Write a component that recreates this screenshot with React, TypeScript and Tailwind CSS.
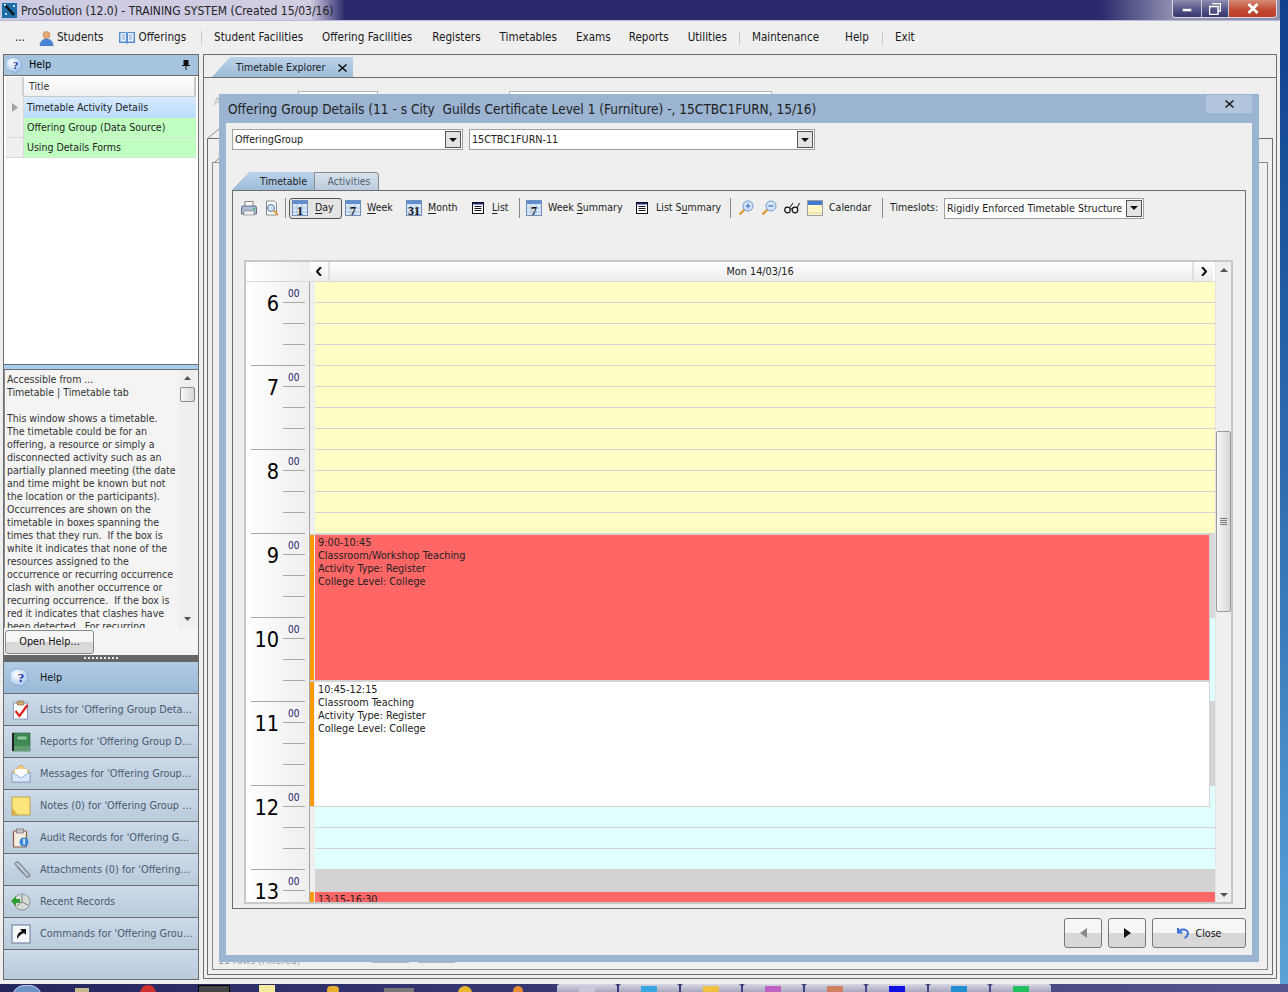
import React from "react";

const HELP_LINES = [
  "Accessible from ...",
  "Timetable | Timetable tab",
  "\u00a0",
  "This window shows a timetable.",
  "The timetable could be for an",
  "offering, a resource or simply a",
  "disconnected activity such as an",
  "partially planned meeting (the date",
  "and time might be known but not",
  "the location or the participants).",
  "Occurrences are shown on the",
  "timetable in boxes spanning the",
  "times that they run.  If the box is",
  "white it indicates that none of the",
  "resources assigned to the",
  "occurrence or recurring occurrence",
  "clash with another occurrence or",
  "recurring occurrence.  If the box is",
  "red it indicates that clashes have",
  "been detected.  For recurring",
];

function HelpIcon({ s = 18 }: { s?: number }) {
  return (
    <svg width={s} height={s} viewBox="0 0 18 18" className="shrink-0">
      <defs>
        <radialGradient id="hb" cx="40%" cy="30%" r="80%">
          <stop offset="0" stopColor="#ffffff" />
          <stop offset="1" stopColor="#8fb8ea" />
        </radialGradient>
      </defs>
      <path d="M9 1a8 7.5 0 1 0-2 14.6l2.5 2 .6-2.2A8 7.5 0 0 0 9 1z" fill="url(#hb)" stroke="#7d9cc8" strokeWidth=".6" />
      <text x="9" y="13" textAnchor="middle" fontSize="12" fontWeight="700" fontFamily="Liberation Serif" fill="#1c2f9c">?</text>
    </svg>
  );
}

function NavIcon({ k }: { k: number }) {
  const p = { width: 20, height: 20, viewBox: "0 0 20 20", className: "shrink-0" };
  if (k === 1)
    return (
      <svg {...p}>
        <rect x="2.5" y="3" width="14" height="16" fill="#fff" stroke="#8aa0c0" />
        <rect x="6" y="1" width="7" height="4" rx="1" fill="#caa672" stroke="#87603a" strokeWidth=".6" />
        <path d="M4.5 11l4 5 8-11" fill="none" stroke="#e02020" strokeWidth="2.2" />
      </svg>
    );
  if (k === 2)
    return (
      <svg {...p}>
        <rect x="2" y="1" width="17" height="18" fill="#3f8a55" stroke="#27583a" strokeWidth=".6" />
        <rect x="1" y="1" width="2" height="18" fill="#222" />
        <rect x="6" y="4" width="10" height="4" fill="#8cc79a" stroke="#2f6d44" strokeWidth=".6" />
        <rect x="3" y="14" width="16" height="5" fill="#5f9d72" />
      </svg>
    );
  if (k === 3)
    return (
      <svg {...p}>
        <path d="M10 1L1 8v10h18V8z" fill="#f6cf7d" stroke="#c89a4a" strokeWidth=".7" />
        <path d="M4 5h12v7l-6 3-6-3z" fill="#fff" />
        <path d="M1 8l9 6 9-6v10H1z" fill="#d8e6fb" stroke="#6f93cf" strokeWidth=".7" />
      </svg>
    );
  if (k === 4)
    return (
      <svg {...p}>
        <rect x="1" y="1" width="18" height="18" fill="#fbe57c" stroke="#b99a3a" strokeWidth=".8" />
        <path d="M1 12l6 7H1z" fill="#d6b13f" />
      </svg>
    );
  if (k === 5)
    return (
      <svg {...p}>
        <rect x="2.5" y="3" width="13" height="16" rx="1" fill="#f5ece0" stroke="#8b5a45" strokeWidth="1.2" />
        <rect x="5.5" y="1" width="7" height="4" fill="#c9c1c1" stroke="#666" strokeWidth=".6" />
        <circle cx="13" cy="14" r="4.5" fill="#3b87d8" />
        <rect x="12.3" y="11" width="1.5" height="5.5" fill="#fff" />
      </svg>
    );
  if (k === 6)
    return (
      <svg {...p}>
        <path d="M15 16L5 5c-2-2.400 1-4 3-2l10 11c1.500 2-1 4-3 2L6 7" fill="none" stroke="#8a8f95" strokeWidth="1.600" />
      </svg>
    );
  if (k === 7)
    return (
      <svg {...p}>
        <circle cx="11" cy="10" r="8" fill="#d8dbd8" stroke="#8d9490" />
        <path d="M11 10V3M11 10l6 3M11 10l-5 4" stroke="#737a76" strokeWidth="1" />
        <path d="M0 9l5-5v3h4v4H5v3z" fill="#2f9a2f" />
      </svg>
    );
  return (
    <svg {...p}>
      <rect x="1" y="1" width="18" height="18" fill="#f5f7fb" stroke="#6a7a9a" />
      <path d="M6 15c0-5 2-7 5-8l-2-2h6v6l-2-2c-3 1-5 3-7 6z" fill="#111" />
    </svg>
  );
}

const NAV = [
  "Lists for 'Offering Group Deta…",
  "Reports for 'Offering Group D…",
  "Messages for 'Offering Group…",
  "Notes (0) for 'Offering Group …",
  "Audit Records for 'Offering G…",
  "Attachments (0) for 'Offering…",
  "Recent Records",
  "Commands for 'Offering Grou…",
];

function LeftPanel() {
  return (
    <div className="ml-[3px] flex h-[926px] w-[196px] shrink-0 flex-col border border-[#6d6d6d] bg-white">
      <div className="flex h-[20px] shrink-0 items-center bg-[#a6c4de] pl-[3px] pr-[8px] text-[10.8px]">
        <HelpIcon s={17} />
        <span className="ml-[5px] flex-1">Help</span>
        <svg width="8" height="10" viewBox="0 0 8 10"><path d="M1.500 0h5v5H8v1H4.500v4h-1V6H0V5h1.500z" fill="#111" /></svg>
      </div>
      <div className="flex h-[290px] shrink-0 flex-col border-y border-[#6d6d6d] px-[2px] text-[10.5px]">
        <div className="flex h-[21px] shrink-0 pt-[1px]">
          <div className="w-[18px] border-r-2 border-[#cfcfcf] bg-[#efefef]" />
          <div className="flex flex-1 items-center border-r-2 border-b border-[#c8c8c8] bg-[linear-gradient(#ffffff,#f0f0f0)] pl-[5px] text-[#333]">Title</div>
        </div>
        <div className="flex h-[21px] shrink-0">
          <div className="flex w-[18px] items-center justify-center border-r border-[#d8d8d8] bg-[#efefef]">
            <svg width="6" height="9" viewBox="0 0 6 9"><path d="M0 0l6 4.500L0 9z" fill="#a0a0a0" /></svg>
          </div>
          <div className="flex flex-1 items-center bg-[linear-gradient(#d7eaff,#bcdcff)] pl-[3px] pt-[1px] text-[#222]">Timetable Activity Details</div>
        </div>
        <div className="flex h-[20px] shrink-0">
          <div className="w-[18px] border-r border-b border-[#d8d8d8] bg-[#efefef]" />
          <div className="flex flex-1 items-center border-b border-[#d8e8d8] bg-[#c1ffc1] pl-[3px] pt-[1px] text-[#222]">Offering Group (Data Source)</div>
        </div>
        <div className="flex h-[20px] shrink-0">
          <div className="w-[18px] border-r border-b border-[#d8d8d8] bg-[#efefef]" />
          <div className="flex flex-1 items-center border-b border-[#d8e8d8] bg-[#c1ffc1] pl-[3px] pt-[1px] text-[#222]">Using Details Forms</div>
        </div>
      </div>
      <div className="h-[5px] shrink-0 border-b border-[#6d6d6d] bg-[#a9cdf2]" />
      <div className="flex h-[258px] shrink-0 overflow-hidden border-l border-[#8a8a8a] bg-[#f4f4f4]">
        <div className="w-[174px] overflow-hidden pl-[2px] pt-[3px] text-[10.5px] leading-[13px] whitespace-pre text-[#333]">
          {HELP_LINES.map((l, i) => (
            <div key={i}>{l}</div>
          ))}
        </div>
        <div className="flex w-[17px] flex-col items-center bg-[#efefef] pt-[6px]">
          <svg width="7" height="4" viewBox="0 0 7 4"><path d="M3.500 0L7 4H0z" fill="#555" /></svg>
          <div className="mt-[7px] h-[15px] w-[15px] rounded-[2px] border border-[#8a8a8a] bg-[linear-gradient(90deg,#f8f8f8,#d8d8d8)]" />
          <div className="flex-1" />
          <svg className="mb-[7px]" width="7" height="4" viewBox="0 0 7 4"><path d="M0 0h7L3.500 4z" fill="#555" /></svg>
        </div>
      </div>
      <div className="flex h-[27px] shrink-0 items-center border-t border-[#f4f4f4] bg-[#f4f4f4] pl-[1px]">
        <div className="flex h-[24px] w-[89px] items-center justify-center rounded-[3px] border border-[#8a8a8a] bg-[linear-gradient(#f6f6f6_50%,#d9d9d9_50%)] pt-[1px] text-[10.8px] text-[#111]">Open Help...</div>
      </div>
      <div className="flex h-[7px] shrink-0 items-start justify-center bg-[#666]">
        <div className="mt-[2px] h-[2px] w-[35px] bg-[repeating-linear-gradient(90deg,#e8e8e8_0,#e8e8e8_2px,#666_2px,#666_4px)]" />
      </div>
      <div className="flex h-[32px] shrink-0 items-center border-b border-[#6d6d6d] bg-[linear-gradient(#b1cbe4,#9ab9d7)] pl-[7px] text-[10.8px] text-[#111]">
        <HelpIcon s={20} />
        <span className="ml-[9px] pt-[2px]">Help</span>
      </div>
      {NAV.map((t, i) => (
        <div key={t} className="flex h-[32px] shrink-0 items-center border-b border-[#6d6d6d] bg-[linear-gradient(#cddbea,#b9cadb)] pl-[7px] text-[10.8px] text-[#4a5a70]">
          <NavIcon k={i + 1} />
          <span className="ml-[9px] whitespace-nowrap pt-[2px]">{t}</span>
        </div>
      ))}
      <div className="flex-1 bg-[linear-gradient(#cddbea,#b9cadb)]" />
    </div>
  );
}

function Sep({ className }: { className: string }) {
  return <div className={`h-[14px] w-[1px] bg-[#c8c8c8] ${className}`} />;
}

function MenuBar() {
  return (
    <div className="flex h-[33px] shrink-0 items-center pl-[15px] pt-[1px] text-[11.6px] text-[#1a1a1a]">
      <span>...</span>
      <svg className="ml-[14px]" width="15" height="15" viewBox="0 0 15 15">
        <circle cx="7.500" cy="4" r="3.500" fill="#e8a878" stroke="#a86a3a" strokeWidth=".5" />
        <path d="M1 15c0-5 3-7 6.500-7S14 10 14 15z" fill="#4a86d8" stroke="#2a5aa0" strokeWidth=".5" />
      </svg>
      <span className="ml-[3px]">Students</span>
      <svg className="ml-[16px]" width="16" height="14" viewBox="0 0 16 14">
        <path d="M0 1h7.500l.5 1 .5-1H16v11H9l-1 1-1-1H0z" fill="#5c8fd0" />
        <path d="M1.500 2h5.500v8.500H1.500zM9 2h5.500v8.500H9z" fill="#e9f1fb" />
        <path d="M3 4h3M3 6h3M3 8h3M10 4h3M10 6h3M10 8h3" stroke="#7a9ccc" strokeWidth=".8" />
      </svg>
      <span className="ml-[3px]">Offerings</span>
      <Sep className="ml-[15px]" />
      <span className="ml-[12px]">Student Facilities</span>
      <span className="ml-[19px]">Offering Facilities</span>
      <span className="ml-[20px]">Registers</span>
      <span className="ml-[19px]">Timetables</span>
      <span className="ml-[19px]">Exams</span>
      <span className="ml-[18px]">Reports</span>
      <span className="ml-[19px]">Utilities</span>
      <Sep className="ml-[12px]" />
      <span className="ml-[12px]">Maintenance</span>
      <span className="ml-[26px]">Help</span>
      <Sep className="ml-[13px]" />
      <span className="ml-[12px]">Exit</span>
    </div>
  );
}

function TitleBar() {
  return (
    <div className="flex h-[21px] shrink-0 items-center border-b border-[#b9b9d6] bg-[linear-gradient(90deg,#c9cbe3_0,#d3cde3_310px,#2a2a6c_345px,#2a2a6c_1100px,#8f8fb0_1172px)] pl-[2px] text-[12px]">
      <svg className="shrink-0" width="15" height="15" viewBox="0 0 15 15">
        <rect width="15" height="15" fill="#1c6fa8" />
        <path d="M3 2l9 10" stroke="#111" strokeWidth="2.400" />
        <path d="M2 2l2 0M11 3h2M3 11h2" stroke="#fff" strokeWidth="1.500" />
      </svg>
      <span className="ml-[4px] flex-1 whitespace-nowrap pt-[1px] text-[#222]">ProSolution (12.0) - TRAINING SYSTEM (Created 15/03/16)</span>
      <div className="mr-[3px] flex h-[18px] self-start overflow-hidden rounded-b-[4px] border border-t-0 border-[#d9d9e8]">
        <div className="flex w-[29px] items-center justify-center border-r border-[#c8c8dc] bg-[linear-gradient(#8f8fb3,#5a5a8a_50%,#34346e)] pt-[3px]">
          <div className="h-[4px] w-[10px] border border-[#7878a0] bg-white" />
        </div>
        <div className="flex w-[27px] items-center justify-center border-r border-[#c8c8dc] bg-[linear-gradient(#8f8fb3,#5a5a8a_50%,#34346e)]">
          <svg width="12" height="12" viewBox="0 0 12 12"><path d="M3 .5h8.500V8H9M.5 3.500H9v8H.5z" fill="none" stroke="#fff" strokeWidth="1.500" /></svg>
        </div>
        <div className="flex w-[47px] items-center justify-center bg-[linear-gradient(#d88b7a,#c04a30_60%,#c0392b)]">
          <svg width="12" height="11" viewBox="0 0 12 11"><path d="M1.500 1l9 9M10.500 1l-9 9" stroke="#fff" strokeWidth="2.800" /></svg>
        </div>
      </div>
    </div>
  );
}

function Cal({ n }: { n: string }) {
  return (
    <svg width="16" height="16" viewBox="0 0 16 16" className="shrink-0">
      <rect x=".5" y=".5" width="15" height="15" fill="#dbe7f7" stroke="#6e8db8" />
      <rect x="1" y="1" width="14" height="3" fill="#5f8fd0" />
      <path d="M1 8h14M1 12h14M5 4v11M10 4v11" stroke="#9fb8d8" strokeWidth=".7" />
      <text x="8" y="14.500" textAnchor="middle" fontSize="12" fontWeight="700" fontFamily="Liberation Serif" fill="#111">{n}</text>
    </svg>
  );
}

function ListIco() {
  return (
    <svg width="12" height="12" viewBox="0 0 12 12" className="shrink-0">
      <rect x=".5" y=".5" width="11" height="11" fill="#fff" stroke="#111" />
      <rect x="1" y="1" width="10" height="1.500" fill="#1a2a8a" />
      <path d="M2.500 4.500h7M2.500 6.500h7M2.500 8.500h7" stroke="#111" />
    </svg>
  );
}

function Mag({ sign }: { sign: "+" | "-" }) {
  return (
    <svg width="16" height="16" viewBox="0 0 16 16" className="shrink-0">
      <path d="M6.500 9.500L1.500 14.500" stroke="#e39a3a" strokeWidth="2.400" />
      <circle cx="10" cy="6" r="5" fill="#d5e6fb" stroke="#6f97cf" />
      <path d={sign === "+" ? "M7.500 6h5M10 3.500v5" : "M7.500 6h5"} stroke="#3f6fb8" strokeWidth="1.200" />
    </svg>
  );
}

function Toolbar() {
  return (
    <div className="flex h-[22px] shrink-0 items-center text-[10.5px] text-[#222]">
      <svg className="ml-[8px] shrink-0" width="16" height="15" viewBox="0 0 16 15">
        <rect x="4" y="0.500" width="8" height="5" fill="#fff" stroke="#888" />
        <path d="M1 5h14l.5 3v5H.5V8z" fill="#a9bdd6" stroke="#60708a" />
        <rect x="3" y="10" width="10" height="4" fill="#f4f4f4" stroke="#777" strokeWidth=".6" />
        <rect x="12" y="7" width="2" height="1.500" fill="#3ac03a" />
      </svg>
      <svg className="ml-[7px] shrink-0" width="16" height="16" viewBox="0 0 16 16">
        <path d="M2.500 1h8l2 2v12h-10z" fill="#fff" stroke="#8a8a8a" />
        <circle cx="7" cy="8" r="3.500" fill="#cfe2f6" stroke="#5c7da8" />
        <path d="M9.500 10.500L14 15" stroke="#e39a3a" strokeWidth="2" />
      </svg>
      <div className="ml-[5px] h-[20px] w-[1px] bg-[#888]" />
      <div className="ml-[3px] flex h-[21px] w-[53px] items-center rounded-[3px] border border-[#555] bg-[#e4e4e4] pl-[2px]">
        <Cal n="1" />
        <span className="ml-[7px]"><u className="underline-offset-2">D</u>ay</span>
      </div>
      <div className="ml-[3px]"><Cal n="7" /></div>
      <span className="ml-[6px] w-[28px]"><u className="underline-offset-2">W</u>eek</span>
      <div className="ml-[11px]"><Cal n="31" /></div>
      <span className="ml-[6px] w-[30px]"><u className="underline-offset-2">M</u>onth</span>
      <div className="ml-[14px]"><ListIco /></div>
      <span className="ml-[8px] w-[17px]"><u className="underline-offset-2">L</u>ist</span>
      <div className="ml-[10px] h-[20px] w-[1px] bg-[#888]" />
      <div className="ml-[6px]"><Cal n="7" /></div>
      <span className="ml-[6px] w-[74px] whitespace-nowrap">Week <u className="underline-offset-2">S</u>ummary</span>
      <div className="ml-[14px]"><ListIco /></div>
      <span className="ml-[8px] w-[64px] whitespace-nowrap">List S<u className="underline-offset-2">u</u>mmary</span>
      <div className="ml-[10px] h-[20px] w-[1px] bg-[#888]" />
      <div className="ml-[7px]"><Mag sign="+" /></div>
      <div className="ml-[7px]"><Mag sign="-" /></div>
      <svg className="ml-[7px] shrink-0" width="16" height="12" viewBox="0 0 16 12">
        <circle cx="3.500" cy="8" r="2.800" fill="none" stroke="#111" strokeWidth="1.200" />
        <circle cx="11" cy="8" r="2.800" fill="none" stroke="#111" strokeWidth="1.200" />
        <path d="M6 7.500c1-1 2-1 2.500 0M5.500 6L9 1M13 6l2.500-5" fill="none" stroke="#111" />
      </svg>
      <svg className="ml-[7px] shrink-0" width="16" height="17" viewBox="0 0 16 17">
        <rect x=".5" y=".5" width="15" height="15" fill="#fff6c8" stroke="#9aa0a8" />
        <rect x="1" y="1" width="14" height="4" fill="#3f7ad0" />
        <path d="M1 13h14" stroke="#c9b878" strokeDasharray="1 1" />
      </svg>
      <span className="ml-[6px] w-[43px]">Calendar</span>
      <div className="ml-[10px] h-[20px] w-[1px] bg-[#888]" />
      <span className="ml-[7px] w-[48px]">Timeslots:</span>
      <div className="ml-[6px]">
        <Combo w="w-[200px]" text="Rigidly Enforced Timetable Structure" size="text-[10.6px]" />
      </div>
    </div>
  );
}

function Combo({ w, text, size = "text-[10.7px]" }: { w: string; text: string; size?: string }) {
  return (
    <div className={`flex h-[21px] ${w} items-center border border-[#a0a0a0] bg-white ${size} text-[#222]`}>
      <span className="flex-1 whitespace-nowrap pl-[2px] pt-[1px]">{text}</span>
      <div className="m-[1px] flex h-[17px] w-[16px] shrink-0 items-center justify-center border border-[#555] bg-[#e4e4e4]">
        <svg width="8" height="4" viewBox="0 0 8 4"><path d="M0 0h8L4 4z" fill="#111" /></svg>
      </div>
    </div>
  );
}

function Hour({ h }: { h: number }) {
  return (
    <div className="ml-[5px] flex h-[84px] w-[54px] shrink-0 border-b border-[#a8a8a8]">
      <div className="w-[28px] pt-[10px] text-right text-[21.5px] leading-[24px] text-black">{h}</div>
      <div className="ml-[4px] w-[22px]">
        <div className="h-[21px] border-b border-[#a8a8a8] pl-[5px] pt-[6px] text-[10px] leading-[12px] text-[#1a1a6a]">00</div>
        <div className="h-[21px] border-b border-[#a8a8a8]" />
        <div className="h-[21px] border-b border-[#a8a8a8]" />
      </div>
    </div>
  );
}

function Slot({ bg, h = "h-[21px]", last }: { bg: string; h?: string; last?: boolean }) {
  return (
    <div className={`flex ${h} shrink-0`}>
      <div className="w-[5px] shrink-0 bg-[#efefef]" />
      <div className={`flex-1 ${bg} ${last ? "" : "border-b border-[#d3d3d3]"}`} />
    </div>
  );
}

function Card({ bg, h, lines }: { bg: string; h: string; lines: string[] }) {
  return (
    <div className={`flex ${h} shrink-0`}>
      <div className="w-[4px] shrink-0 bg-[#ff9900]" />
      <div className="w-[1px] shrink-0 bg-[#efefef]" />
      <div className={`flex-1 overflow-hidden pl-[3px] pt-[1px] text-[10.8px] leading-[13px] text-[#222] ${bg}`}>
        {lines.map((l) => (
          <div key={l}>{l}</div>
        ))}
      </div>
    </div>
  );
}

function Schedule() {
  const yellow = Array.from({ length: 12 }, (_, i) => i);
  return (
    <div className="ml-[11px] flex h-[644px] w-[989px] shrink-0 border-2 border-[#c8c8c8] bg-white">
      <div className="flex min-w-0 flex-1 flex-col overflow-hidden">
        <div className="flex h-[20px] shrink-0 border-b border-[#d8d8d8]">
          <div className="w-[64px] shrink-0 bg-[linear-gradient(90deg,#ffffff,#eeeeee)]" />
          <div className="flex w-[20px] items-center justify-center border-r-2 border-[#e0e0e0] bg-[linear-gradient(#ffffff,#ececec)]">
            <svg width="6" height="9" viewBox="0 0 6 9"><path d="M5 0L1 4.500 5 9" fill="none" stroke="#111" strokeWidth="2" /></svg>
          </div>
          <div className="flex flex-1 items-center justify-center bg-[linear-gradient(#ffffff,#ececec)] pt-[1px] pr-[2px] text-[10.8px] text-[#222]">Mon 14/03/16</div>
          <div className="flex w-[21px] items-center justify-center border-l-2 border-[#e0e0e0] bg-[linear-gradient(#ffffff,#ececec)]">
            <svg width="6" height="9" viewBox="0 0 6 9"><path d="M1 0l4 4.500L1 9" fill="none" stroke="#111" strokeWidth="2" /></svg>
          </div>
          <div className="w-[2px] bg-white" />
        </div>
        <div className="flex min-h-0 flex-1 overflow-hidden">
          <div className="w-[64px] shrink-0 border-r border-[#a8a8a8] bg-[linear-gradient(90deg,#ffffff,#eeeeee)]">
            {[6, 7, 8, 9, 10, 11, 12, 13].map((h) => (
              <Hour key={h} h={h} />
            ))}
          </div>
          <div className="flex min-w-0 flex-1 flex-col">
            {yellow.map((i) => (
              <Slot key={i} bg="bg-[#ffffc4]" />
            ))}
            <div className="flex h-[273px] shrink-0">
              <div className="flex min-w-0 flex-1 flex-col">
                <div className="h-[1px] shrink-0 bg-[#d3d3d3]" />
                <Card bg="bg-[#ff6666]" h="h-[145px]" lines={["9:00-10:45", "Classroom/Workshop Teaching", "Activity Type: Register", "College Level: College"]} />
                <div className="h-[2px] shrink-0 bg-[#d3d3d3]" />
                <Card bg="bg-white" h="h-[124px]" lines={["10:45-12:15", "Classroom Teaching", "Activity Type: Register", "College Level: College"]} />
                <div className="h-[1px] shrink-0 bg-[#d3d3d3]" />
              </div>
              <div className="flex w-[6px] shrink-0 flex-col border-l border-[#d3d3d3]">
                <div className="h-[84px] shrink-0 bg-[#d8d8d8]" />
                <div className="h-[83px] shrink-0 bg-[#e0ffff]" />
                <div className="h-[85px] shrink-0 bg-[#d3d3d3]" />
                <div className="flex-1 bg-[#e0ffff]" />
              </div>
            </div>
            <Slot bg="bg-[#e0ffff]" />
            <Slot bg="bg-[#e0ffff]" />
            <Slot bg="bg-[#e0ffff]" h="h-[20px]" last />
            <Slot bg="bg-[#d3d3d3]" h="h-[23px]" last />
            <Card bg="bg-[#ff6666]" h="h-[20px]" lines={["13:15-16:30"]} />
          </div>
        </div>
      </div>
      <div className="flex w-[16px] shrink-0 flex-col items-center border-l border-[#e4e4e4] bg-[#efefef] pt-[6px]">
        <svg width="8" height="4" viewBox="0 0 8 4"><path d="M4 0l4 4H0z" fill="#555" /></svg>
        <div className="mt-[159px] flex h-[181px] w-[15px] shrink-0 items-center justify-center rounded-[2px] border border-[#9a9a9a] bg-[linear-gradient(90deg,#f6f6f6,#d6d6d6)]">
          <svg width="7" height="7" viewBox="0 0 7 7"><path d="M0 .5h7M0 2.500h7M0 4.500h7M0 6.500h7" stroke="#777" /></svg>
        </div>
        <div className="flex-1" />
        <svg className="mb-[5px]" width="8" height="4" viewBox="0 0 8 4"><path d="M0 0h8L4 4z" fill="#555" /></svg>
      </div>
    </div>
  );
}

function FootBtn({ w, ml, children }: { w: string; ml: string; children: React.ReactNode }) {
  return (
    <div className={`flex h-[30px] ${w} ${ml} items-center justify-center rounded-[3px] border border-[#777] bg-[linear-gradient(#f6f6f6_50%,#d8d8d8_50%)] text-[10.6px] text-[#111]`}>
      {children}
    </div>
  );
}

function Dialog() {
  return (
    <div className="absolute left-[15px] top-[39px] flex h-[868px] w-[1040px] flex-col bg-[#9ab4d1] px-[7px] pb-[7px]">
      <div className="flex h-[29px] shrink-0 items-start">
        <div className="flex-1 whitespace-pre pl-[2px] pt-[6px] text-[13.55px] leading-[19px] text-[#222]">
          Offering Group Details (11 - s City  Guilds Certificate Level 1 (Furniture) -, 15CTBC1FURN, 15/16)
        </div>
        <div className="mt-[1px] flex h-[18px] w-[46px] items-center justify-center bg-[#b1c5dc]">
          <svg width="9" height="8" viewBox="0 0 9 8"><path d="M.5.500l8 7M8.500.500l-8 7" stroke="#111" strokeWidth="1.400" /></svg>
        </div>
      </div>
      <div className="flex min-h-0 flex-1 flex-col bg-[#efefef] px-[6px] pt-[6px]">
        <div className="flex shrink-0">
          <Combo w="w-[231px]" text="OfferingGroup" />
          <div className="ml-[6px]">
            <Combo w="w-[346px]" text="15CTBC1FURN-11" />
          </div>
        </div>
        <div className="mt-[22px] flex h-[18px] shrink-0 items-end text-[10.5px]">
          <div className="flex h-[18px] w-[82px] items-center justify-end bg-[linear-gradient(#bcd3ea,#9dbcd8)] pr-[7px] pt-[1px] text-[#222] [clip-path:polygon(0_100%,17px_0,100%_0,100%_100%)]">Timetable</div>
          <div className="flex h-[18px] w-[65px] items-center justify-center rounded-tr-[4px] border border-b-0 border-[#8a8a8a] bg-[linear-gradient(#d9e2ec,#bccbdc)] pl-[5px] text-[#4f5f73]">Activities</div>
        </div>
        <div className="flex h-[719px] w-[1014px] shrink-0 flex-col border border-[#6d6d6d]">
          <div className="mt-[6px]"><Toolbar /></div>
          <div className="mt-[41px]"><Schedule /></div>
        </div>
        <div className="mt-[9px] flex shrink-0 pl-[832px]">
          <FootBtn w="w-[38px]" ml="">
            <svg width="7" height="10" viewBox="0 0 7 10"><path d="M7 0L0 5l7 5z" fill="#8a8a8a" /></svg>
          </FootBtn>
          <FootBtn w="w-[38px]" ml="ml-[6px]">
            <svg width="7" height="10" viewBox="0 0 7 10"><path d="M0 0l7 5-7 5z" fill="#111" /></svg>
          </FootBtn>
          <FootBtn w="w-[94px]" ml="ml-[6px]">
            <svg width="12" height="12" viewBox="0 0 12 12"><path d="M1 1v4.500h4.500M1.500 5C3 2.500 7 1.500 9.500 3.500s1.500 6-2 7.500" fill="none" stroke="#3f72d8" strokeWidth="2" /></svg>
            <span className="ml-[7px] pt-[1px]">Close</span>
          </FootBtn>
        </div>
      </div>
    </div>
  );
}

function MainPanel() {
  return (
    <div className="relative ml-[4px] flex h-[925px] w-[1074px] shrink-0 flex-col border border-[#6d6d6d]">
      <div className="flex h-[23px] shrink-0 items-end border-b border-[#6d6d6d] pl-[8px]">
        <div className="flex h-[20px] w-[141px] items-center whitespace-nowrap bg-[linear-gradient(#bcd3ea,#9dbcd8)] pl-[24px] pt-[1px] text-[10.5px] text-[#222] [clip-path:polygon(0_100%,18px_0,100%_0,100%_100%)]">
          <span className="flex-1">Timetable Explorer</span>
          <svg className="mr-[6px]" width="9" height="8" viewBox="0 0 9 8"><path d="M.5.500l8 7M8.500.500l-8 7" stroke="#111" strokeWidth="1.500" /></svg>
        </div>
      </div>
      <div className="flex min-h-0 flex-1 flex-col pl-[3px] pr-[3px]">
        <div className="flex h-[60px] shrink-0 pl-[7px] pt-[13px] text-[10.8px] text-[#bdbdbd]">
          <span className="pt-[3px]">A</span>
          <div className="ml-[77px] h-[20px] w-[80px] border border-[#b5b5b5] bg-white" />
          <div className="ml-[131px] h-[20px] w-[263px] border border-[#b5b5b5] bg-white" />
        </div>
        <div className="mb-[3px] flex min-h-0 flex-1 flex-col border border-[#6d6d6d] pl-[4px] pr-[4px] pt-[23px] pb-[4px]">
          <div className="flex min-h-0 flex-1 flex-col justify-end border border-[#8a8a8a] pb-[3px] pl-[5px] text-[10.5px] leading-[12px] text-[#9a9a9a]">
            <div className="flex items-start whitespace-nowrap">
              <span className="w-[154px]">11 rows (Filtered)</span>
              <div className="h-[9px] w-[37px] border border-[#b5b5b5] bg-white" />
              <div className="ml-[9px] h-[9px] w-[37px] border border-[#b5b5b5] bg-white" />
            </div>
          </div>
        </div>
      </div>
      <svg className="absolute left-[3px] top-[73px]" width="14" height="12" viewBox="0 0 14 12">
        <path d="M0 11L12 1h2" fill="none" stroke="#8a8a8a" />
      </svg>
      <svg className="absolute left-[8px] top-[102px]" width="10" height="6" viewBox="0 0 10 6">
        <path d="M3 5L8 0" fill="none" stroke="#8a8a8a" />
      </svg>
      <Dialog />
    </div>
  );
}

function Taskbar() {
  const buttons = [
    "bg-[#c8c8d8]", "bg-[#38a8e0]", "bg-[#f0c040]", "bg-[#c060c0]", "bg-[#d08060]", "bg-[#1010e0]", "bg-[#2090d0]", "bg-[#20c060]",
  ];
  return (
    <div className="flex h-[8px] shrink-0 items-start overflow-hidden bg-[linear-gradient(90deg,#26265f,#3a3a78_50%,#54548f)]">
      <div className="ml-[12px] mt-[1px] h-[24px] w-[30px] shrink-0 rounded-full border border-[#c0d0e8] bg-[#6d92c8]" />
      <div className="ml-[33px] mt-[4px] h-[6px] w-[14px] shrink-0 bg-[#c8b890]" />
      <div className="ml-[51px] mt-[1px] h-[10px] w-[16px] shrink-0 rounded-t-full bg-[#d03030]" />
      <div className="ml-[42px] mt-[1px] h-[8px] w-[32px] shrink-0 border border-black bg-[#444]" />
      <div className="ml-[29px] mt-[1px] h-[8px] w-[16px] shrink-0 bg-[#f4eca0]" />
      <div className="ml-[52px] mt-[2px] h-[8px] w-[12px] shrink-0 rounded-full bg-[#e8b030]" />
      <div className="ml-[45px] mt-[4px] h-[6px] w-[30px] shrink-0 bg-[#777]" />
      <div className="ml-[44px] mt-[2px] h-[8px] w-[14px] shrink-0 rounded-t-full bg-[#e8b830]" />
      <div className="ml-[41px] mt-[2px] h-[8px] w-[10px] shrink-0 rounded-t-full bg-[#e88a30]" />
      <div className="ml-[34px] flex shrink-0">
        {buttons.map((b, i) => (
          <div key={i} className="mr-[2px] flex h-[8px] w-[60px] justify-center rounded-t-[3px] bg-[linear-gradient(#d8d8e4,#a8a8c0)] pt-[2px]">
            <div className={`h-[6px] w-[16px] ${b}`} />
          </div>
        ))}
      </div>
    </div>
  );
}

export default function App() {
  return (
    <div className="flex h-[992px] w-[1288px] flex-col overflow-hidden font-['DejaVu_Sans_Condensed','Liberation_Sans',sans-serif]">
      <div className="flex min-h-0 flex-1">
        <div className="flex w-[1280px] shrink-0 flex-col bg-[#efefef]">
          <TitleBar />
          <MenuBar />
          <div className="flex min-h-0 flex-1 items-start">
            <LeftPanel />
            <MainPanel />
          </div>
        </div>
        <div className="flex-1 bg-[linear-gradient(#0f3f8f,#2f6fb0_50%,#5aa4d8)]" />
      </div>
      <Taskbar />
    </div>
  );
}
